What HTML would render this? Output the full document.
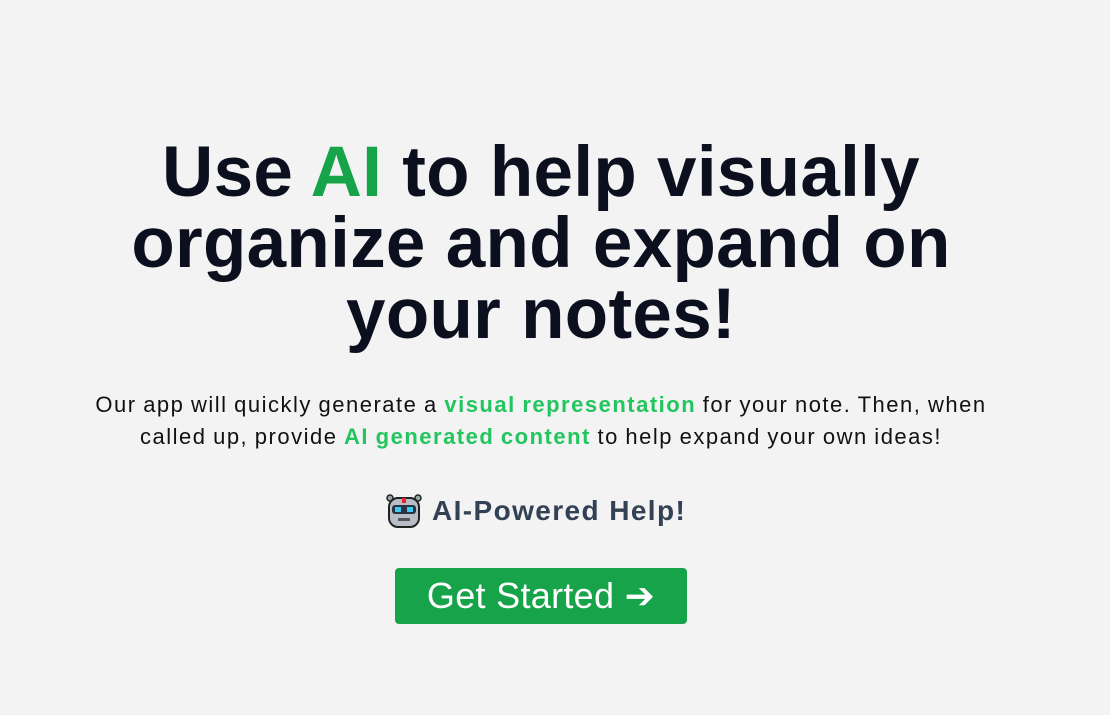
<!DOCTYPE html>
<html><head><meta charset="utf-8"><style>
html,body{margin:0;padding:0;width:1110px;height:715px;overflow:hidden;background:#f3f3f3;font-family:"Liberation Sans",sans-serif;}
h1{position:absolute;top:137px;left:0;width:1082px;margin:0;text-align:center;font-size:71px;line-height:71px;font-weight:700;color:#0b0f1e;letter-spacing:0.3px;}
h1 span{color:#16a34a}
p{position:absolute;top:389px;left:0;width:1082px;margin:0;text-align:center;font-size:22px;line-height:32px;color:#111;letter-spacing:1.5px;word-spacing:-1px;}
p b{color:#22c55e}
.help{position:absolute;top:491px;left:386px;height:40px;display:flex;align-items:center;font-size:28px;font-weight:700;color:#334155;letter-spacing:1.4px;}
.btn{position:absolute;left:395px;top:568px;width:292px;height:56px;background:#16a34a;border-radius:4px;color:#fff;font-size:36px;line-height:56px;text-align:center;letter-spacing:0.3px;}
</style></head><body>
<h1>Use <span>AI</span> to help visually<br>organize and expand on<br>your notes!</h1>
<p>Our app will quickly generate a <b>visual representation</b> for your note. Then, when<br>called up, provide <b>AI generated content</b> to help expand your own ideas!</p>
<div class="help"><svg width="36" height="36" viewBox="0 0 36 36" style="margin-right:10px">
<circle cx="4" cy="5" r="3" fill="#9aa" stroke="#222" stroke-width="1.5"/><circle cx="32" cy="5" r="3" fill="#9aa" stroke="#222" stroke-width="1.5"/>
<rect x="3" y="5" width="30" height="29" rx="9" fill="#b9bec6" stroke="#222" stroke-width="2"/>
<rect x="16" y="5" width="4" height="5" fill="#e23"/>
<rect x="6" y="12" width="24" height="9" rx="3" fill="#2a3340"/>
<rect x="9" y="14" width="6" height="5" fill="#3cc8f0"/><rect x="21" y="14" width="6" height="5" fill="#3cc8f0"/>
<rect x="12" y="25" width="12" height="3" fill="#555"/></svg>AI-Powered Help!</div>
<div class="btn">Get Started ➔</div>
</body></html>
